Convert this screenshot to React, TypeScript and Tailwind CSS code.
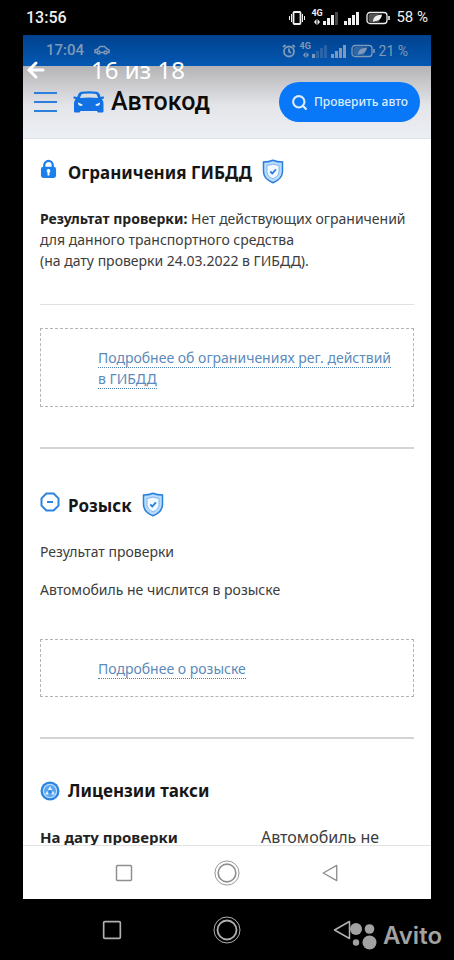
import type { ReactNode } from "react";
import { ArrowLeft, Search } from "lucide-react";

const Signal = ({ bars, className }: { bars: number; className?: string }) => (
  <svg viewBox="0 0 16 14" fill="currentColor" className={className}>
    <rect x="0" y="10" width="3" height="4" />
    <rect x="4" y="7" width="3" height="7" opacity={bars > 1 ? 1 : 0.3} />
    <rect x="8" y="4" width="3" height="10" opacity={bars > 2 ? 1 : 0.3} />
    <rect x="12" y="1" width="3" height="13" opacity={bars > 3 ? 1 : 0.3} />
  </svg>
);

const Network = ({ bars }: { bars: number }) => (
  <span className="relative block h-[14px] w-[27px]">
    <span className="absolute -top-[2px] left-0 text-[9px] leading-[9px] font-bold">4G</span>
    <svg viewBox="0 0 8 6" fill="currentColor" className="absolute top-2 left-[2px] h-[6px] w-2">
      <path d="M3.5 0v6L1 3zM4.5 0v6L7 3z" />
    </svg>
    <Signal bars={bars} className="absolute top-0 left-[12px] h-[14px] w-4" />
  </span>
);

const Battery = () => (
  <svg viewBox="0 0 24 14" fill="none" stroke="currentColor" className="h-[14px] w-6">
    <rect x="1" y="1.5" width="20" height="11" rx="3" strokeWidth="1.3" />
    <path d="M23 5v4" strokeWidth="1.6" />
    <rect x="2.5" y="3" width="11" height="8" rx="1.5" fill="currentColor" stroke="none" opacity="0.35" />
    <path d="M7 11c0-5 3-7 9-7.500C15.500 8 12.500 10 9 10z" fill="currentColor" stroke="none" />
  </svg>
);

const ShieldCheck = () => (
  <svg viewBox="0 0 22 25" fill="none" stroke="#2b7fdc" className="h-[25px] w-[22px]">
    <path d="M11 1.200c3 1.300 6 1.800 9.500 1.800v9.500c0 5.500-4 9-9.500 11.300C5.500 21.500 1.500 18 1.500 12.500V3C5 3 8 2.500 11 1.200z" fill="#b9dcfb" strokeWidth="1.500" />
    <path d="M11 5c2 .8 4 1.200 6 1.300v6.200c0 3.500-2.500 5.700-6 7.400-3.500-1.700-6-3.900-6-7.400V6.300C7 6.200 9 5.800 11 5z" fill="#f2f9ff" stroke="#7fb6f0" />
    <path d="m8.300 12.500 2 2 3.600-4.200" strokeWidth="1.800" />
  </svg>
);

const LockIcon = () => (
  <svg viewBox="0 0 18 20" className="h-5 w-[17px]">
    <path d="M4.500 9V6a4.500 4.500 0 0 1 9 0v3" fill="none" stroke="#1b80ee" strokeWidth="2.400" />
    <rect x="1" y="7.500" width="16" height="12" rx="2.500" fill="#1b80ee" />
    <path d="M9 10a2 2 0 0 0-1 3.700V17h2v-3.300A2 2 0 0 0 9 10z" fill="#fff" />
  </svg>
);

const WantedIcon = () => (
  <svg viewBox="0 0 20 20" fill="none" stroke="#2b84e0" className="h-5 w-5">
    <path d="M6.400 1.500h7.200l4.900 4.900v7.200l-4.900 4.900H6.400l-4.900-4.900V6.400z" strokeWidth="2" strokeLinejoin="round" />
    <path d="M7 10h6" strokeWidth="2" />
  </svg>
);

const TaxiIcon = () => (
  <svg viewBox="0 0 20 20" fill="none" className="h-5 w-5">
    <circle cx="10" cy="10" r="9.500" fill="#2b84e0" />
    <circle cx="10" cy="10" r="6.600" fill="#5ba5ee" stroke="#b7d9fa" strokeWidth="1.300" />
    <path d="M10 5.200 7.800 9h4.400zM7.200 9.800l-2 3.400 3.400.6zM12.800 9.800l2 3.400-3.400.6z" fill="#e2f1ff" />
    <circle cx="10" cy="10.800" r="1.400" fill="#2b84e0" />
  </svg>
);

const CarLogo = () => (
  <svg viewBox="0 0 32 22" className="h-[22px] w-8">
    <path
      d="M4.500 5.500C5.500 2.500 6 1.200 8.500.8Q16-.2 23.500.8c2.500.4 3 1.700 4 4.700l.2.600 2-.6c1.700-.3 2 1.900.4 2.300l-1.200.4c1 1.200 1.600 2.700 1.600 4.700V20c0 1-.5 1.500-1.500 1.500h-3.300c-1 0-1.400-.4-1.600-1.500H7.400c-.2 1.100-.6 1.500-1.600 1.500H2.500C1.500 21.500 1 21 1 20v-7.100c0-2 .6-3.500 1.600-4.700l-1.200-.4C-.2 7.400.1 5.200 1.800 5.500l2 .6z"
      fill="#1272e4"
    />
    <path d="M8.500 3.300Q9.500 2.600 16 2.500q6.500.1 7.500.8l1.600 3.700Q16 6 6.900 7z" fill="#dcdde0" />
    <path
      d="M5 11.500l4.500 2c.3 1.100-.6 1.500-2 1.400-1.700-.1-2.600-1.300-2.500-3.400zM27 11.500l-4.500 2c-.3 1.100.6 1.500 2 1.400 1.700-.1 2.600-1.300 2.500-3.400z"
      fill="#eceef2"
    />
  </svg>
);

const SquareKey = ({ className }: { className: string }) => (
  <svg viewBox="0 0 18 18" fill="none" stroke="currentColor" className={className}>
    <rect x="1.500" y="1.500" width="15" height="15" rx="1" strokeWidth="1.500" />
  </svg>
);

const HomeKey = ({ className }: { className: string }) => (
  <svg viewBox="0 0 28 28" fill="none" stroke="currentColor" className={className}>
    <circle cx="14" cy="14" r="13" />
    <circle cx="14" cy="14" r="9.500" strokeWidth="1.800" />
  </svg>
);

const BackKey = ({ className }: { className: string }) => (
  <svg viewBox="0 0 18 20" fill="none" stroke="currentColor" className={className}>
    <path d="M16.500 1.500v17L1.500 10z" strokeWidth="1.500" strokeLinejoin="round" />
  </svg>
);

const SectionTitle = ({ icon, children, checked }: { icon: ReactNode; children: ReactNode; checked?: boolean }) => (
  <h2 className="flex h-7 text-[17px] leading-7 font-bold text-[#161616]">
    <span className="w-7 shrink-0">{icon}</span>
    {children}
    {checked && (
      <span className="ml-[10px]">
        <ShieldCheck />
      </span>
    )}
  </h2>
);

const MoreLink = ({ children }: { children: ReactNode }) => (
  <div className="border border-dashed border-[#b4b4b4] pt-[18px] pr-4 pb-[17px] pl-[57px] leading-[21px]">
    <a href="#" className="border-b border-dotted border-[#4f83b8] text-[#5b8abb]">
      {children}
    </a>
  </div>
);

export default function App() {
  return (
    <div className="relative flex h-screen flex-col overflow-hidden bg-black font-['Noto_Sans',sans-serif]">
      {/* Phone status bar */}
      <div className="flex h-[35px] shrink-0 items-center justify-between px-[26px] font-[Roboto,sans-serif] text-base text-[#f0f0f0]">
        <span className="font-medium">13:56</span>
        <div className="flex items-center gap-[6px]">
          <svg viewBox="0 0 16 14" fill="none" stroke="currentColor" className="h-[14px] w-4">
            <rect x="4.500" y="1" width="7" height="12" rx="1" strokeWidth="1.800" />
            <path d="M2.500 3v8M13.500 3v8M.5 5v4M15.500 5v4" />
          </svg>
          <Network bars={3} />
          <Signal bars={4} className="h-[14px] w-4" />
          <Battery />
          <span className="text-[15px]">58 %</span>
        </div>
      </div>

      {/* Photo being viewed */}
      <main className="mx-[23px] flex min-h-0 flex-1 flex-col bg-white">
        <div className="flex h-[31px] shrink-0 items-center justify-between bg-linear-to-b from-[#00428f] to-[#0458b2] px-[23px] font-[Roboto,sans-serif] text-sm text-[#8199b8]">
          <div className="flex items-center gap-[10px]">
            <span className="text-[15px] font-medium">17:04</span>
            <svg viewBox="0 0 16 10" fill="none" stroke="currentColor" strokeWidth="1.500" className="h-[10px] w-4">
              <path d="M3 7.500H1V5l3-1 2-2.500h4.500L13 4l2 1v2.500h-2M6 7.500h4" />
              <circle cx="4.500" cy="7.500" r="1.500" />
              <circle cx="11.500" cy="7.500" r="1.500" />
            </svg>
          </div>
          <div className="flex items-center gap-1">
            <svg viewBox="0 0 14 14" fill="none" stroke="currentColor" strokeWidth="1.800" className="h-[14px] w-[14px]">
              <circle cx="7" cy="7.500" r="5" />
              <path d="M7 4.500v3l2 1.500M1 3l2.500-2M13 3l-2.500-2" />
            </svg>
            <Network bars={1} />
            <Signal bars={4} className="h-[14px] w-4" />
            <Battery />
            <span>21 %</span>
          </div>
        </div>

        <header className="flex h-[73px] shrink-0 items-center border-b border-[#dfe1e5] bg-linear-to-b from-[#b4b4b6] via-[#e4e5e9] via-55% to-[#eceff4] px-[11px]">
          <button aria-label="Меню" className="flex w-[23px] flex-col gap-[7px]">
            <span className="h-[2px] w-full bg-[#2c7fdb]" />
            <span className="h-[2px] w-full bg-[#2c7fdb]" />
            <span className="h-[2px] w-full bg-[#2c7fdb]" />
          </button>
          <a href="#" className="ml-4 flex items-center gap-[6px] font-[Roboto,sans-serif] text-[25px] font-medium text-[#0c0c0c]">
            <CarLogo />
            Автокод
          </a>
          <button className="ml-auto flex h-10 items-center gap-[6px] rounded-full bg-[#0878f8] px-3 text-xs font-medium text-[#dcecff]">
            <Search className="h-[17px] w-[17px]" strokeWidth={3} />
            Проверить авто
          </button>
        </header>

        <div className="min-h-0 flex-1 overflow-hidden px-[17px] pt-5 text-sm text-[#3c3c3c]">
          <section>
            <SectionTitle icon={<LockIcon />} checked>
              Ограничения ГИБДД
            </SectionTitle>
            <p className="mt-[21px] leading-[21px]">
              <strong className="text-[#222]">Результат проверки:</strong> Нет действующих ограничений
              <br />
              для данного транспортного средства
              <br />
              (на дату проверки 24.03.2022 в ГИБДД).
            </p>
            <hr className="mt-[33px] mb-[23px] border-[#e0e0e0]" />
            <MoreLink>
              Подробнее об ограничениях рег. действий
              <br />в ГИБДД
            </MoreLink>
          </section>

          <hr className="mt-10 mb-[38px] border-t-2 border-[#d4d4d4]" />

          <section className="pt-[5px]">
            <SectionTitle icon={<WantedIcon />} checked>
              Розыск
            </SectionTitle>
            <p className="mt-[21px] leading-[21px]">Результат проверки</p>
            <p className="mt-[17px] mb-[39px] leading-[21px]">Автомобиль не числится в розыске</p>
            <MoreLink>Подробнее о розыске</MoreLink>
          </section>

          <hr className="mt-10 mb-[38px] border-t-2 border-[#d4d4d4]" />

          <section>
            <SectionTitle icon={<span className="flex h-7 items-center"><TaxiIcon /></span>}>Лицензии такси</SectionTitle>
            <dl className="mt-5 flex text-base leading-6">
              <dt className="w-[221px] shrink-0 text-[15px] font-bold text-[#222]">На дату проверки</dt>
              <dd>Автомобиль не</dd>
            </dl>
          </section>
        </div>

        <div className="flex h-[54px] shrink-0 items-center justify-around border-t border-[#e2e2e2] px-[51px] text-[#8f8f8f]">
          <SquareKey className="h-[18px] w-[18px]" />
          <HomeKey className="h-[26px] w-[26px]" />
          <BackKey className="h-[18px] w-[18px]" />
        </div>
      </main>

      {/* Phone navigation keys */}
      <nav className="flex h-[61px] shrink-0 items-center justify-around px-[56px] text-[#b0b0b0]">
        <button aria-label="Недавние">
          <SquareKey className="h-5 w-5" />
        </button>
        <button aria-label="Домой">
          <HomeKey className="h-7 w-7" />
        </button>
        <button aria-label="Назад">
          <BackKey className="h-5 w-5" />
        </button>
      </nav>

      {/* Photo viewer controls */}
      <div className="absolute top-[54px] left-6 flex items-center gap-[43px] text-white">
        <button aria-label="Закрыть">
          <ArrowLeft className="h-6 w-6" strokeWidth={3} />
        </button>
        <span className="text-2xl leading-8">16 из 18</span>
      </div>

      {/* Watermark */}
      <div className="absolute right-3 bottom-2 flex items-center gap-[6px] text-[#a2a2a2]">
        <svg viewBox="0 0 28 28" fill="currentColor" className="h-7 w-7">
          <circle cx="7" cy="7" r="6" />
          <circle cx="20.500" cy="7" r="4.800" />
          <circle cx="7" cy="20.500" r="3.200" />
          <circle cx="20.500" cy="20.500" r="7" />
        </svg>
        <span className="font-[Inter,sans-serif] text-2xl leading-8 font-semibold">Avito</span>
      </div>
    </div>
  );
}
